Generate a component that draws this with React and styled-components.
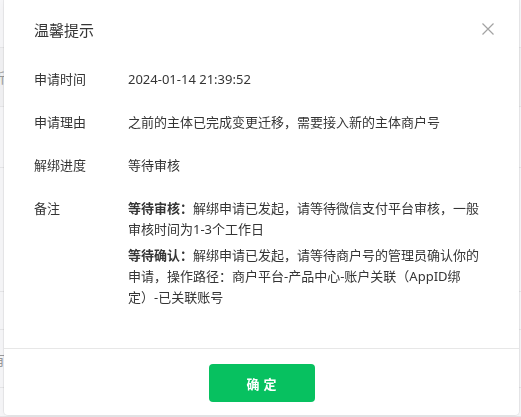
import React from "react";
import styled, { createGlobalStyle } from "styled-components";

const GlobalStyle = createGlobalStyle`
    html, body {
        margin: 0;
        padding: 0;
        background: #f6f6f8;
        overflow: hidden;
    }
    body {
        font-family: "Noto Sans", "Noto Sans CJK SC", sans-serif;
        color: #353535;
    }
`

const Page = styled.div`
    height: 417px;
    display: flex;
    flex-direction: column;
`

const BackRow = styled.div`
    height: ${props => props.height}px;
    box-sizing: border-box;
    border-bottom: 1px solid #e6e6e8;
    display: flex;
    align-items: center;
    font-size: 14px;
    color: #9a9a9a;
    background: ${props => props.shade ? "#f1f1f3" : "transparent"};
    text-indent: -9px;
`

const Modal = styled.div`
    position: fixed;
    left: 4px;
    top: 0;
    width: 515px;
    background: #fff;
    border-radius: 0 0 4px 4px;
    box-shadow: 0 0 0 1px rgba(0, 0, 0, 0.06), 0 2px 8px rgba(0, 0, 0, 0.04);
    display: flex;
    flex-direction: column;
`

const Header = styled.div`
    display: flex;
    align-items: center;
    justify-content: space-between;
    padding: 19px 25px 0 30px;
`

const Title = styled.h3`
    margin: 0;
    font-size: 15px;
    line-height: 22px;
    font-weight: 400;
    color: #353535;
`

const Close = styled.button`
    width: 12px;
    height: 12px;
    padding: 0;
    border: none;
    background: none;
    cursor: pointer;
    display: flex;
    margin-top: -2px;
`

const Body = styled.div`
    padding: 28px 32px 40px 30px;
    display: flex;
    flex-direction: column;
    gap: 22px;
`

const Row = styled.div`
    display: flex;
    font-size: 13px;
    line-height: 21px;
`

const Label = styled.div`
    width: 94px;
    flex-shrink: 0;
    color: #353535;
`

const Value = styled.div`
    flex: 1;
    color: #353535;
    display: flex;
    flex-direction: column;
    gap: 5px;
`

const Para = styled.p`
    margin: 0;
`

const Strong = styled.b`
    font-weight: 700;
`

const Footer = styled.div`
    border-top: 1px solid #e7e7e7;
    padding: 15px 0 13px;
    display: flex;
    justify-content: center;
`

const Button = styled.button`
    width: 106px;
    height: 38px;
    border: none;
    border-radius: 4px;
    background: #07c160;
    color: #fff;
    font-family: "Noto Sans CJK SC", sans-serif;
    font-size: 13px;
    font-weight: 700;
    letter-spacing: 4px;
    text-indent: 4px;
    cursor: pointer;
`

const ROWS = [
    { label: "申请时间", value: "2024-01-14 21:39:52" },
    { label: "申请理由", value: "之前的主体已完成变更迁移，需要接入新的主体商户号" },
    { label: "解绑进度", value: "等待审核" },
]

const BACK = [
    { h: 48, t: "" },
    { h: 59, t: "新", shade: true },
    { h: 61, t: "" },
    { h: 124, t: "" },
    { h: 38, t: "" },
    { h: 58, t: "有" },
    { h: 29, t: "" },
]

const App = () => {
    return (
        <>
            <GlobalStyle />
            <Page>
                {BACK.map((r, i) => (
                    <BackRow key={i} height={r.h} shade={r.shade}>{r.t}</BackRow>
                ))}
            </Page>
            <Modal>
                <Header>
                    <Title>温馨提示</Title>
                    <Close aria-label="关闭">
                        <svg width="12" height="12" viewBox="0 0 12 12">
                            <path d="M0.5 0.5 L11.5 11.5 M11.5 0.5 L0.5 11.5" stroke="#a3a3a3" strokeWidth="1.2" fill="none" />
                        </svg>
                    </Close>
                </Header>
                <Body>
                    {ROWS.map(r => (
                        <Row key={r.label}>
                            <Label>{r.label}</Label>
                            <Value>{r.value}</Value>
                        </Row>
                    ))}
                    <Row>
                        <Label>备注</Label>
                        <Value>
                            <Para>
                                <Strong>等待审核：</Strong>解绑申请已发起，请等待微信支付平台审核，一般审核时间为1-3个工作日
                            </Para>
                            <Para>
                                <Strong>等待确认：</Strong>解绑申请已发起，请等待商户号的管理员确认你的申请，操作路径：商户平台-产品中心-账户关联（AppID绑定）-已关联账号
                            </Para>
                        </Value>
                    </Row>
                </Body>
                <Footer>
                    <Button>确定</Button>
                </Footer>
            </Modal>
        </>
    )
}

export default App
